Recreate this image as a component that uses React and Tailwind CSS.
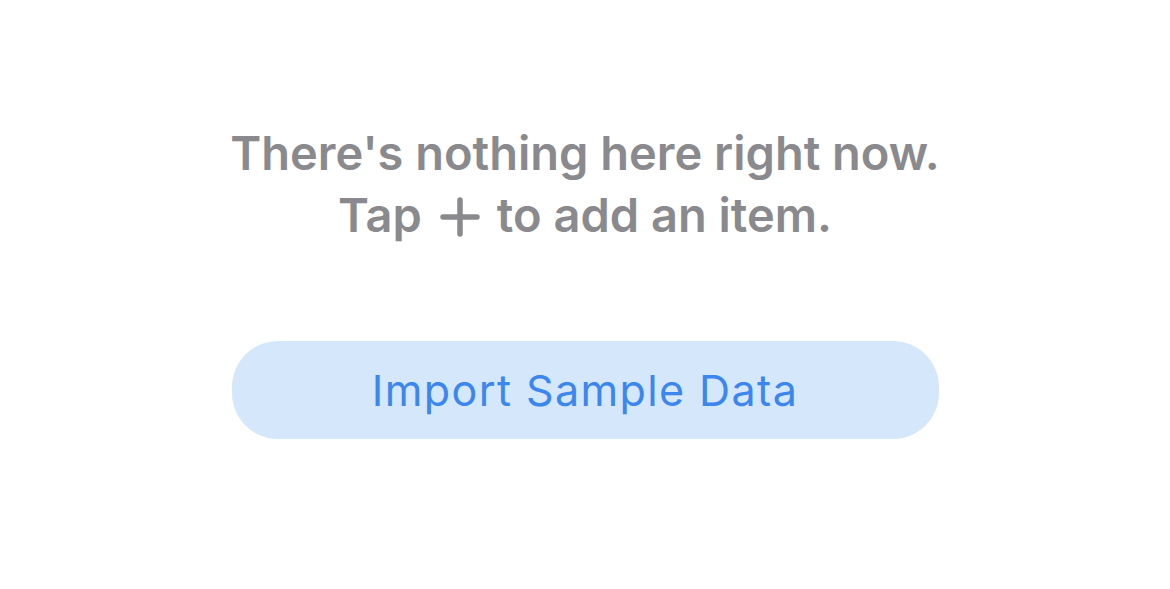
export default function App() {
  return (
    <div className="w-[1170px] h-[589px] bg-white flex flex-col items-center" style={{ fontFamily: 'Inter, "Noto Sans", sans-serif' }}>
      <div className="mt-[122px] text-center text-[#8a8a8e] font-semibold text-[47px] leading-[62px]">
        <div>There's nothing here right now.</div>
        <div className="flex items-center justify-center">
          <span>Tap</span>
          <svg className="ml-[18px] mr-[17px] mt-[4px]" width="40" height="40" viewBox="0 0 40 40" fill="none">
            <path d="M20 3v34M3 20h34" stroke="#8a8a8e" strokeWidth="5.5" strokeLinecap="round" />
          </svg>
          <span>to add an item.</span>
        </div>
      </div>
      <button className="mt-[95px] w-[707px] h-[98px] rounded-[46px] bg-[#d5e7fa] text-[#3b86ef] text-[43px] tracking-[1.4px] font-normal flex items-center justify-center">
        Import Sample Data
      </button>
    </div>
  );
}
